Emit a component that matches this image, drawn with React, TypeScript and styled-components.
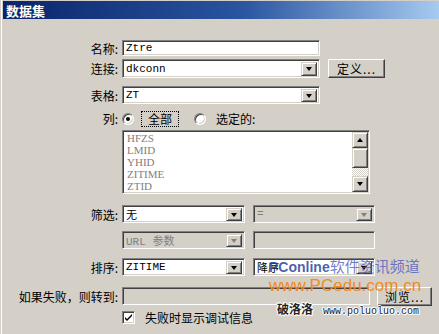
import styled, { createGlobalStyle } from 'styled-components';

const Global = createGlobalStyle`
  html, body { margin: 0; padding: 0; background: #d4d0c8; }
  body { font-family: "Noto Sans CJK SC", sans-serif; font-size: 12px; color: #000; }
`;

const Window = styled.div`
  position: relative;
  width: 439px;
  height: 334px;
  overflow: hidden;
  box-sizing: border-box;
  background: #d4d0c8;
  border-left: 1px solid #d4d0c8;
  box-shadow: inset 1px 0 #fff;
  padding-top: 1px;
`;

const TitleBar = styled.div`
  height: 18px;
  margin-left: 2px;
  padding-left: 3px;
  display: flex;
  align-items: center;
  background: linear-gradient(to right, #0a246a 0%, #2a55a0 55%, #a6caf0 100%);
  color: #fff;
  font-weight: bold;
  font-size: 13px;
`;

const Body = styled.div`
  display: flex;
  flex-direction: column;
`;

const Row = styled.div<{ $top: number; $h: number }>`
  display: flex;
  align-items: center;
  margin-top: ${p => p.$top}px;
  height: ${p => p.$h}px;
`;

const Label = styled.div`
  width: 121px;
  flex-shrink: 0;
  box-sizing: border-box;
  padding-right: 4px;
  text-align: right;
  white-space: nowrap;
`;

const Field = styled.div<{ $w: number; $disabled?: boolean }>`
  width: ${p => p.$w}px;
  height: 100%;
  box-sizing: border-box;
  display: flex;
  align-items: center;
  padding: 0 2px 0 3px;
  border: 1px solid;
  border-color: #808080 #fff #fff #808080;
  box-shadow: inset 1px 1px #404040, inset -1px -1px #d4d0c8;
  background: ${p => (p.$disabled ? '#d4d0c8' : '#fff')};
  color: ${p => (p.$disabled ? '#808080' : '#000')};
  font-family: "Liberation Mono", "Noto Sans CJK SC", monospace;
  font-size: 11px;
  white-space: nowrap;
`;

const Value = styled.span`
  flex: 1;
  overflow: hidden;
`;

const DropButton = styled.div<{ $disabled?: boolean }>`
  width: 16px;
  height: calc(100% - 3px);
  margin-top: 1px;
  box-sizing: border-box;
  display: flex;
  align-items: center;
  justify-content: center;
  background: #d4d0c8;
  border: 1px solid;
  border-color: #d4d0c8 #404040 #404040 #d4d0c8;
  box-shadow: inset 1px 1px #fff, inset -1px -1px #808080;
  &::after {
    content: '';
    border-left: 3.5px solid transparent;
    border-right: 3.5px solid transparent;
    border-top: 4px solid ${p => (p.$disabled ? '#808080' : '#000')};
  }
`;

const Push = styled.div<{ $w: number }>`
  width: ${p => p.$w}px;
  height: 19px;
  box-sizing: border-box;
  display: flex;
  align-items: center;
  justify-content: center;
  border: 1px solid;
  border-color: #fff #404040 #404040 #fff;
  box-shadow: inset -1px -1px #808080;
  background: #d4d0c8;
  letter-spacing: 1px;
`;

const Radio = styled.div<{ $on?: boolean }>`
  width: 12px;
  height: 12px;
  box-sizing: border-box;
  border-radius: 50%;
  border: 1px solid;
  border-color: #808080 #fff #fff #808080;
  box-shadow: inset 1px 1px #404040, inset -1px -1px #d4d0c8;
  background: #fff;
  display: flex;
  align-items: center;
  justify-content: center;
  &::after {
    content: '';
    width: 4px;
    height: 4px;
    border-radius: 50%;
    background: ${p => (p.$on ? '#000' : 'transparent')};
  }
`;

const Focus = styled.span`
  margin-left: 8px;
  padding: 0 6px;
  outline: 1px dotted #000;
  outline-offset: 0;
  line-height: 14px;
`;

const RadioText = styled.span`
  margin-left: 10px;
`;

const List = styled.div`
  width: 248px;
  height: 64px;
  box-sizing: border-box;
  display: flex;
  border: 1px solid;
  border-color: #808080 #fff #fff #808080;
  box-shadow: inset 1px 1px #404040, inset -1px -1px #d4d0c8;
  background: #fff;
  padding: 1px;
`;

const Items = styled.div`
  flex: 1;
  overflow: hidden;
  padding: 0 0 0 3px;
  color: #808080;
  font-family: "Liberation Serif", serif;
  font-size: 11px;
  line-height: 12px;
`;

const Scroll = styled.div`
  width: 16px;
  display: flex;
  flex-direction: column;
`;

const ScrollBtn = styled.div<{ $up?: boolean }>`
  height: 16px;
  box-sizing: border-box;
  display: flex;
  align-items: center;
  justify-content: center;
  background: #d4d0c8;
  border: 1px solid;
  border-color: #d4d0c8 #404040 #404040 #d4d0c8;
  box-shadow: inset 1px 1px #fff, inset -1px -1px #808080;
  &::after {
    content: '';
    border-left: 3.5px solid transparent;
    border-right: 3.5px solid transparent;
    ${p => (p.$up ? 'border-bottom: 4px solid #000;' : 'border-top: 4px solid #000;')}
  }
`;

const Thumb = styled.div`
  height: 20px;
  box-sizing: border-box;
  background: #d4d0c8;
  border: 1px solid;
  border-color: #d4d0c8 #404040 #404040 #d4d0c8;
  box-shadow: inset 1px 1px #fff, inset -1px -1px #808080;
`;

const Track = styled.div`
  flex: 1;
  background: repeating-conic-gradient(#fff 0 25%, #d4d0c8 0 50%) 0 0 / 2px 2px;
`;

const Check = styled.div`
  width: 13px;
  height: 13px;
  box-sizing: border-box;
  border: 1px solid;
  border-color: #808080 #fff #fff #808080;
  box-shadow: inset 1px 1px #404040, inset -1px -1px #d4d0c8;
  background: #fff;
  display: flex;
  align-items: center;
  justify-content: center;
`;

const CheckText = styled.span`
  margin-left: 10px;
  font-size: 12px;
`;

const Gap = styled.div<{ $w: number }>`
  width: ${p => p.$w}px;
  flex-shrink: 0;
`;

const Mark = styled.div`
  position: absolute;
  left: 268px;
  top: 257px;
  pointer-events: none;
  display: flex;
  flex-direction: column;
`;

const MarkTop = styled.div`
  white-space: nowrap;
  line-height: 18px;
`;

const Brand = styled.span`
  font-family: "Liberation Sans", Arial, sans-serif;
  font-weight: bold;
  font-size: 14px;
  color: rgba(40, 70, 160, 0.85);
`;

const Channel = styled.span`
  font-size: 15px;
  color: rgba(80, 90, 190, 0.8);
`;

const Site = styled.div`
  font-family: "Liberation Sans", Arial, sans-serif;
  font-size: 17px;
  line-height: 20px;
  color: #f08a24;
`;

const Stamp = styled.div`
  display: flex;
  align-items: flex-end;
  margin: 4px 0 0 8px;
  text-shadow: 1px 0 #fff, -1px 0 #fff, 0 1px #fff, 0 -1px #fff, 1px 1px #fff, -1px -1px #fff;
`;

const StampName = styled.span`
  font-weight: bold;
  font-size: 12px;
  color: #222;
`;

const StampUrl = styled.span`
  margin-left: 10px;
  font-family: "Liberation Mono", monospace;
  font-size: 10px;
  color: #222;
`;

function Combo({ w, value, disabled }: { w: number; value: string; disabled?: boolean }) {
  return (
    <Field $w={w} $disabled={disabled}>
      <Value>{value}</Value>
      <DropButton $disabled={disabled} />
    </Field>
  );
}

const columns = ['HFZS', 'LMID', 'YHID', 'ZITIME', 'ZTID'];

export default function App() {
  return (
    <Window>
      <Global />
      <TitleBar>数据集</TitleBar>
      <Body>
        <Row $top={21} $h={16}>
          <Label>名称:</Label>
          <Field $w={198}><Value>Ztre</Value></Field>
        </Row>
        <Row $top={3} $h={19}>
          <Label>连接:</Label>
          <Combo w={198} value="dkconn" />
          <Gap $w={8} />
          <Push $w={57}>定义...</Push>
        </Row>
        <Row $top={8} $h={18}>
          <Label>表格:</Label>
          <Combo w={198} value="ZT" />
        </Row>
        <Row $top={6} $h={17}>
          <Label>列:</Label>
          <Radio $on />
          <Focus>全部</Focus>
          <Gap $w={16} />
          <Radio />
          <RadioText>选定的:</RadioText>
        </Row>
        <Row $top={3} $h={64}>
          <Label />
          <List>
            <Items>
              {columns.map(c => (
                <div key={c}>{c}</div>
              ))}
            </Items>
            <Scroll>
              <ScrollBtn $up />
              <Thumb />
              <Track />
              <ScrollBtn />
            </Scroll>
          </List>
        </Row>
        <Row $top={11} $h={18}>
          <Label>筛选:</Label>
          <Combo w={123} value="无" />
          <Gap $w={8} />
          <Combo w={122} value="=" disabled />
        </Row>
        <Row $top={8} $h={18}>
          <Label />
          <Combo w={123} value="URL 参数" disabled />
          <Gap $w={8} />
          <Field $w={122} $disabled />
        </Row>
        <Row $top={9} $h={18}>
          <Label>排序:</Label>
          <Combo w={123} value="ZITIME" />
          <Gap $w={8} />
          <Combo w={122} value="降序" />
        </Row>
        <Row $top={11} $h={18}>
          <Label>如果失败，则转到:</Label>
          <Field $w={248} $disabled />
          <Gap $w={7} />
          <Push $w={55}>浏览...</Push>
        </Row>
        <Row $top={4} $h={16}>
          <Label />
          <Check>
            <svg width="9" height="9" viewBox="0 0 9 9">
              <path d="M1 4 L3 6 L8 1 L8 3 L3 8 L1 6 Z" fill="#000" />
            </svg>
          </Check>
          <CheckText>失败时显示调试信息</CheckText>
        </Row>
      </Body>
      <Mark>
        <MarkTop>
          <Brand>PConline</Brand>
          <Channel>软件资讯频道</Channel>
        </MarkTop>
        <Site>www.PCedu.com.cn</Site>
        <Stamp>
          <StampName>破洛洛</StampName>
          <StampUrl>www.poluoluo.com</StampUrl>
        </Stamp>
      </Mark>
    </Window>
  );
}
